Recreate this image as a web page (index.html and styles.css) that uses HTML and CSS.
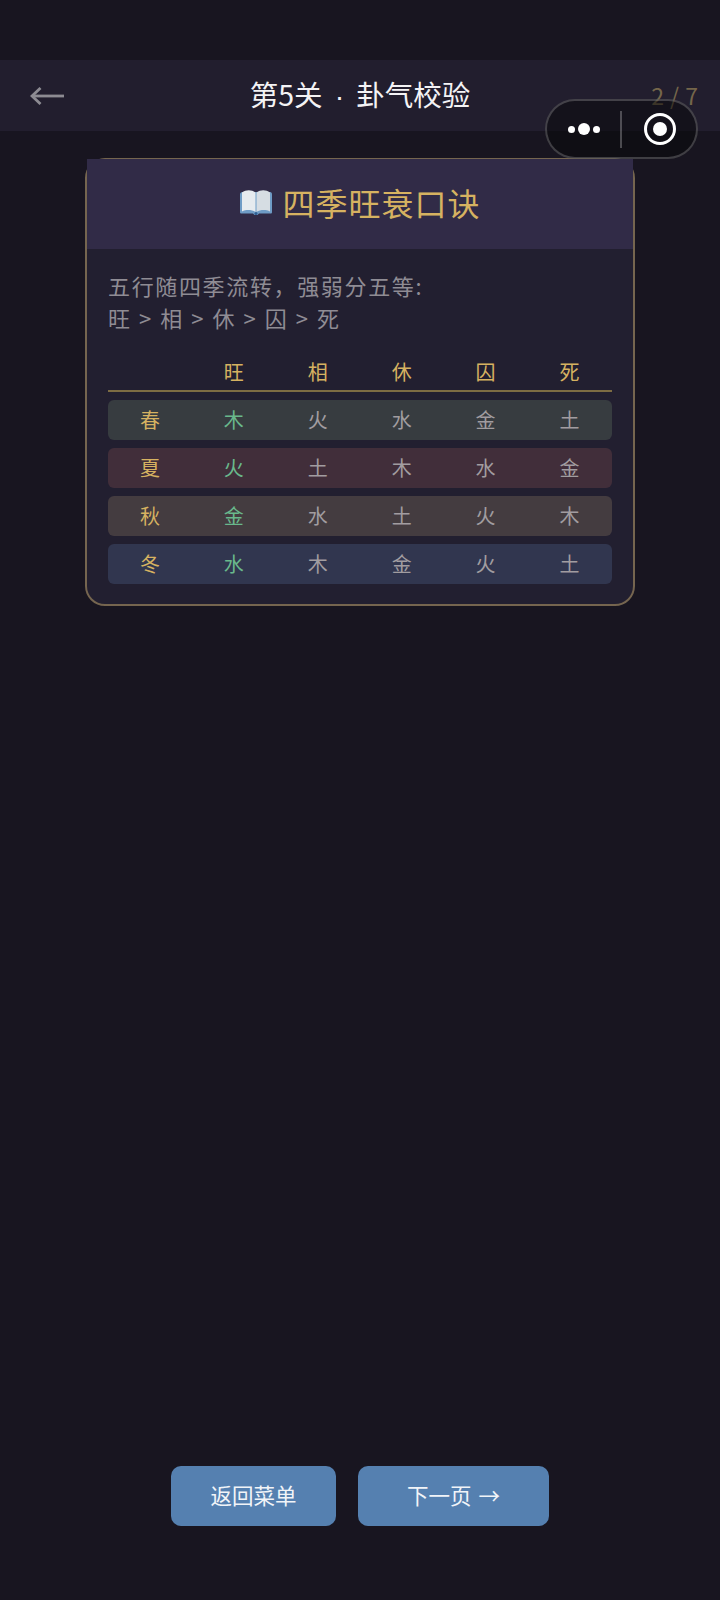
FILE: index.html
```html
<!DOCTYPE html>
<html lang="zh-CN">
<head>
    <meta charset="UTF-8">
    <meta name="viewport" content="width=device-width, initial-scale=1.0">
    <title>第5关 · 卦气校验</title>
    <link rel="stylesheet" href="styles.css">
</head>
<body>
    <div class="page">
        <header class="topbar">
            <svg class="back" width="34" height="18" viewBox="0 0 34 18" fill="none" stroke="#8d8b92" stroke-width="2.800">
                <path d="M34 9H2"/>
                <path d="M10.500 1L2 9l8.500 8"/>
            </svg>
            <h1 class="title">第5关 <span class="title-dot">·</span> 卦气校验</h1>
            <span class="progress">2 / 7</span>
        </header>

        <div class="capsule">
            <div class="capsule-dots">
                <i class="dot"></i><i class="dot dot-big"></i><i class="dot"></i>
            </div>
            <div class="capsule-line"></div>
            <div class="capsule-target"><i></i></div>
        </div>

        <section class="card">
            <div class="card-head">
                <svg class="book" width="34" height="28" viewBox="0 0 34 28">
                    <path d="M1 6.500C1 5 2 4 3.500 4H31c1.500 0 2 1 2 2.500V24c0 1-.5 1.500-1.500 1.500H20l-1.500 1.500h-3L14 25.500H2.500C1.500 25.500 1 25 1 24z" fill="#6f9cc6"/>
                    <path d="M3 4.500C7 1.500 12.500 1.500 16.500 4.500V24C12.500 21.500 7 21.500 3 23.500z" fill="#e6ebef"/>
                    <path d="M31 4.500C27 1.500 21.500 1.500 17.500 4.500V24C21.500 21.500 27 21.500 31 23.500z" fill="#d6dde3"/>
                    <circle cx="17" cy="25.500" r="1.500" fill="#2f5f92"/>
                </svg>
                <h2 class="card-title">四季旺衰口诀</h2>
            </div>
            <div class="card-body">
                <p class="intro">五行随四季流转，强弱分五等:<br>旺 &gt; 相 &gt; 休 &gt; 囚 &gt; 死</p>

                <div class="table">
                    <div class="row row-head">
                        <span></span><span>旺</span><span>相</span><span>休</span><span>囚</span><span>死</span>
                    </div>
                    <div class="row spring">
                        <span class="season">春</span><span class="strong">木</span><span>火</span><span>水</span><span>金</span><span>土</span>
                    </div>
                    <div class="row summer">
                        <span class="season">夏</span><span class="strong">火</span><span>土</span><span>木</span><span>水</span><span>金</span>
                    </div>
                    <div class="row autumn">
                        <span class="season">秋</span><span class="strong">金</span><span>水</span><span>土</span><span>火</span><span>木</span>
                    </div>
                    <div class="row winter">
                        <span class="season">冬</span><span class="strong">水</span><span>木</span><span>金</span><span>火</span><span>土</span>
                    </div>
                </div>
            </div>
        </section>

        <footer class="actions">
            <button class="btn btn-menu">返回菜单</button>
            <button class="btn btn-next">下一页 →</button>
        </footer>
    </div>
</body>
</html>
```

FILE: styles.css
```css
* {
    box-sizing: border-box;
}

body {
    margin: 0;
    background-color: #181520;
    font-family: "Noto Sans CJK SC", "Noto Sans", sans-serif;
}

.page {
    position: relative;
    display: flex;
    flex-direction: column;
    height: 1600px;
    padding-top: 60px;
}

.topbar {
    position: relative;
    display: flex;
    justify-content: center;
    align-items: center;
    height: 71px;
    background: #221e2e;
}

.back {
    position: absolute;
    left: 30px;
    top: 27px;
}

.title {
    margin: 0 0 2px;
    color: #f4f3f5;
    font-size: 28.500px;
    font-weight: 400;
    word-spacing: 5.800px;
    line-height: 69px;
}

.title-dot {
    font-family: "Liberation Sans", sans-serif;
}

.progress {
    position: absolute;
    right: 20px;
    top: 17px;
    color: #75664a;
    font-size: 23px;
    letter-spacing: 2px;
    word-spacing: -3px;
    line-height: 36px;
}

.capsule {
    position: absolute;
    left: 545px;
    top: 99px;
    display: flex;
    align-items: center;
    width: 153px;
    height: 60px;
    border: 2px solid rgba(255, 255, 255, 0.2);
    border-radius: 30px;
    background: rgba(8, 8, 10, 0.52);
}

.capsule-dots {
    display: flex;
    justify-content: center;
    align-items: center;
    gap: 3px;
    width: 73px;
}

.dot {
    width: 7px;
    height: 7px;
    border-radius: 50%;
    background: #fff;
}

.dot-big {
    width: 12px;
    height: 12px;
}

.capsule-line {
    width: 2px;
    height: 37px;
    background: rgba(255, 255, 255, 0.25);
}

.capsule-target {
    display: flex;
    justify-content: center;
    align-items: center;
    width: 32px;
    height: 32px;
    margin-left: 22px;
    border: 3px solid #fff;
    border-radius: 50%;
}

.capsule-target i {
    width: 14px;
    height: 14px;
    border-radius: 50%;
    background: #fff;
}

.card {
    width: 550px;
    height: 448px;
    margin: 27px 0 0 85px;
    border: 2px solid #75654f;
    border-top-width: 1px;
    border-radius: 20px;
    background: #221f30;
}

.card-head {
    display: flex;
    justify-content: center;
    align-items: center;
    gap: 9px;
    height: 90px;
    padding-bottom: 4px;
    background: #312b47;
}

.book {
    flex: none;
}

.card-title {
    margin: 0;
    color: #d6b261;
    font-size: 32px;
    font-weight: 400;
    letter-spacing: 1px;
}

.card-body {
    padding: 19.500px 21.500px 0 21px;
}

.intro {
    margin: 0;
    color: #8f8c94;
    font-size: 22px;
    letter-spacing: 1.650px;
    word-spacing: 0.800px;
    line-height: 32px;
}

.table {
    display: flex;
    flex-direction: column;
    gap: 8px;
    margin-top: 18px;
}

.row {
    display: grid;
    grid-template-columns: repeat(6, 1fr);
    height: 40px;
    border-radius: 6px;
    color: #a19da0;
    font-size: 20px;
    line-height: 39px;
    text-align: center;
}

.row-head {
    height: 41px;
    border-bottom: 2px solid #7d6c43;
    border-radius: 0;
    color: #d6b261;
    line-height: 41px;
}

.season {
    color: #d6b261;
}

.strong {
    color: #69b88c;
}

.spring {
    background: #373c40;
}

.summer {
    background: #412e3a;
}

.autumn {
    background: #443c40;
}

.winter {
    background: #31364f;
}

.actions {
    display: flex;
    justify-content: center;
    gap: 22px;
    margin-top: auto;
    padding-bottom: 74px;
}

.btn {
    height: 60px;
    padding: 0 0 3px;
    border: none;
    border-radius: 10px;
    background: #5580b0;
    color: #f1f4f8;
    font-family: inherit;
    font-size: 21.500px;
}

.btn-menu {
    width: 165px;
}

.btn-next {
    width: 191px;
    word-spacing: 2px;
}
```
